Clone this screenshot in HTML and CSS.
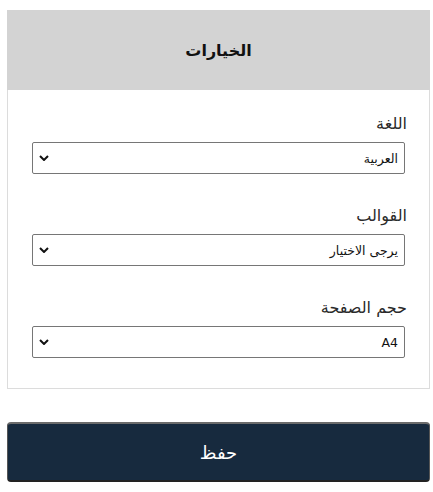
FILE: index.html
```html
<!DOCTYPE html>
<html lang="ar" dir="rtl">
<head>
<meta charset="utf-8">
<title>الخيارات</title>
<link rel="stylesheet" href="styles.css">
</head>
<body>
<div class="page">
  <div class="card">
    <div class="card-header">الخيارات</div>
    <div class="card-body">
      <div class="group">
        <label class="label">اللغة</label>
        <div class="select"><span>العربية</span><svg class="chev" viewBox="0 0 10 6" width="10" height="6"><path d="M1 1l4 4 4-4" fill="none" stroke="#111" stroke-width="2"/></svg></div>
      </div>
      <div class="group">
        <label class="label">القوالب</label>
        <div class="select"><span>يرجى الاختيار</span><svg class="chev" viewBox="0 0 10 6" width="10" height="6"><path d="M1 1l4 4 4-4" fill="none" stroke="#111" stroke-width="2"/></svg></div>
      </div>
      <div class="group">
        <label class="label">حجم الصفحة</label>
        <div class="select"><span>A4</span><svg class="chev" viewBox="0 0 10 6" width="10" height="6"><path d="M1 1l4 4 4-4" fill="none" stroke="#111" stroke-width="2"/></svg></div>
      </div>
    </div>
  </div>
  <button class="save">حفظ</button>
</div>
</body>
</html>
```
FILE: styles.css
```css
html, body {
  margin: 0;
  padding: 0;
  background: #fff;
}
body {
  font-family: "DejaVu Sans", "Noto Sans", sans-serif;
  color: #222;
}
.page {
  margin: 10px 3px 0 7px;
  display: flex;
  flex-direction: column;
  gap: 33px;
}
.card {
  border: 1px solid #dcdcdc;
  border-top: none;
}
.card-header {
  background: #d3d3d3;
  height: 80px;
  margin: 0 -1px;
  display: flex;
  align-items: center;
  justify-content: center;
  font-size: 16px;
  font-weight: bold;
  color: #111;
}
.card-body {
  padding: 22px 22px 30px 24px;
  display: flex;
  flex-direction: column;
  gap: 30px;
}
.group {
  display: flex;
  flex-direction: column;
  gap: 6px;
}
.label {
  font-size: 16px;
  line-height: 24px;
  color: #2a2a2a;
}
.select {
  height: 32px;
  margin-left: 0;
  margin-right: 2px;
  box-sizing: border-box;
  border: 1px solid #767676;
  border-radius: 2px;
  display: flex;
  align-items: center;
  justify-content: space-between;
  padding: 0 6px 0 6px;
  font-size: 12.5px;
  color: #111;
}
.chev {
  display: block;
}
.save {
  height: 60px;
  background: #172a3e;
  color: #fff;
  border: none;
  border-top: 2px solid #6b6b6b;
  border-bottom: 2px solid #222;
  border-left: 1px solid #555;
  border-right: 1px solid #555;
  border-radius: 4px;
  font-family: "DejaVu Sans", sans-serif;
  font-size: 18px;
  padding: 0;
}
```
